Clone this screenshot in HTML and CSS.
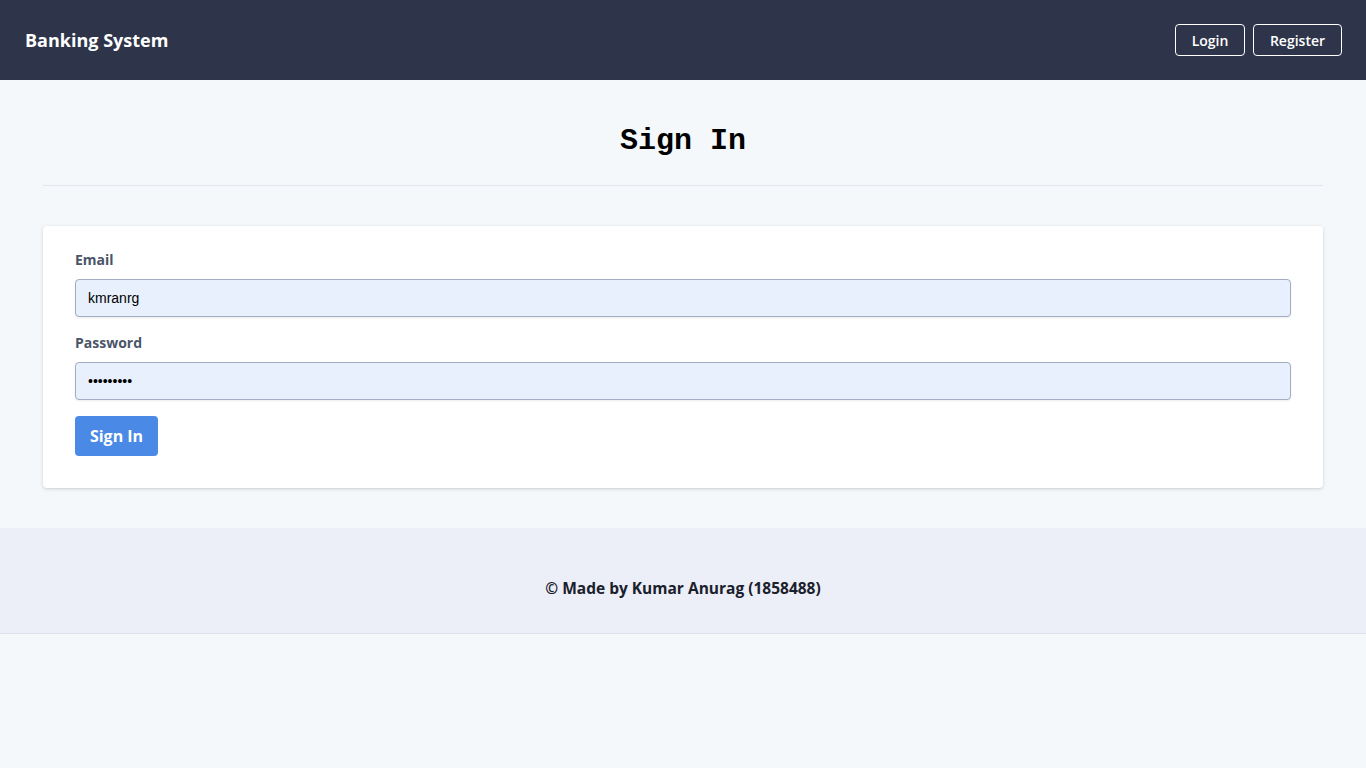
FILE: index.html
```html
<!DOCTYPE html>
<html lang="en">
<head>
<meta charset="utf-8">
<title>Banking System - Sign In</title>
<link rel="stylesheet" href="styles.css">
</head>
<body>
<header class="navbar">
  <a class="brand" href="#">Banking System</a>
  <nav class="nav-actions">
    <a class="nav-btn nav-login" href="#">Login</a>
    <a class="nav-btn nav-register" href="#">Register</a>
  </nav>
</header>
<main class="main">
  <h1 class="page-title">Sign In</h1>
  <hr class="divider">
  <form class="card">
    <label class="label" for="email">Email</label>
    <input class="input" id="email" type="text" value="kmranrg">
    <label class="label" for="password">Password</label>
    <input class="input" id="password" type="password" value="kmranrg12">
    <button class="submit" type="button">Sign In</button>
  </form>
</main>
<footer class="footer">
  <p class="footer-text">© Made by Kumar Anurag (1858488)</p>
</footer>
</body>
</html>
```
FILE: styles.css
```css
* { box-sizing: border-box; }
html, body { margin: 0; padding: 0; }
body {
  background: #f5f8fb;
  font-family: "Open Sans", "Noto Sans", sans-serif;
  color: #1a202c;
}
.navbar {
  height: 80px;
  background: #2e344a;
  display: flex;
  align-items: center;
  justify-content: space-between;
  padding: 0 24px 0 25px;
}
.brand {
  color: #fff;
  font-weight: 700;
  font-size: 18px;
  text-decoration: none;
}
.nav-actions { display: flex; gap: 8px; }
.nav-btn {
  display: flex;
  align-items: center;
  justify-content: center;
  height: 32px;
  padding: 0;
  border: 1px solid #fff;
  border-radius: 4px;
  color: #fff;
  font-weight: 600;
  font-size: 14px;
  text-decoration: none;
}
.nav-login { width: 70px; }
.nav-register { width: 89px; }
.main {
  padding: 0 43px 40px;
}
.page-title {
  margin: 0;
  padding-top: 16px;
  height: 105px;
  display: flex;
  align-items: center;
  justify-content: center;
  font-family: "Liberation Mono", "Courier New", monospace;
  font-size: 30px;
  font-weight: 700;
  color: #000;
}
.divider {
  margin: 0 0 40px;
  border: 0;
  border-top: 1px solid #e2e6ee;
}
.card {
  background: #fff;
  border-radius: 4px;
  box-shadow: 0 1px 4px rgba(0, 0, 0, 0.12), 0 1px 2px rgba(0, 0, 0, 0.06);
  padding: 24px 32px 32px;
  display: flex;
  flex-direction: column;
  align-items: flex-start;
}
.label {
  font-size: 14px;
  font-weight: 700;
  color: #4a5568;
  line-height: 20px;
  margin-bottom: 9px;
}
.input {
  width: 100%;
  height: 38px;
  background: #e8f0fe;
  border: 1px solid #a3aec2;
  border-radius: 4px;
  box-shadow: 0 1px 2px rgba(0, 0, 0, 0.08);
  padding: 0 12px;
  font-family: "Liberation Sans", Arial, sans-serif;
  font-size: 14px;
  color: #000;
  margin-bottom: 16px;
}
.submit {
  height: 40px;
  width: 83px;
  background: #4a89e6;
  color: #fff;
  border: 0;
  border-radius: 4px;
  font-family: "Open Sans", "Noto Sans", sans-serif;
  font-weight: 700;
  font-size: 16px;
  padding: 0;
}
.footer {
  background: #eceff7;
  height: 106px;
  border-bottom: 1px solid #dde1e8;
  display: flex;
  align-items: center;
  justify-content: center;
  padding-top: 15px;
}
.footer-text {
  margin: 0;
  font-weight: 700;
  font-size: 15.5px;
  color: #1a202c;
}
```
